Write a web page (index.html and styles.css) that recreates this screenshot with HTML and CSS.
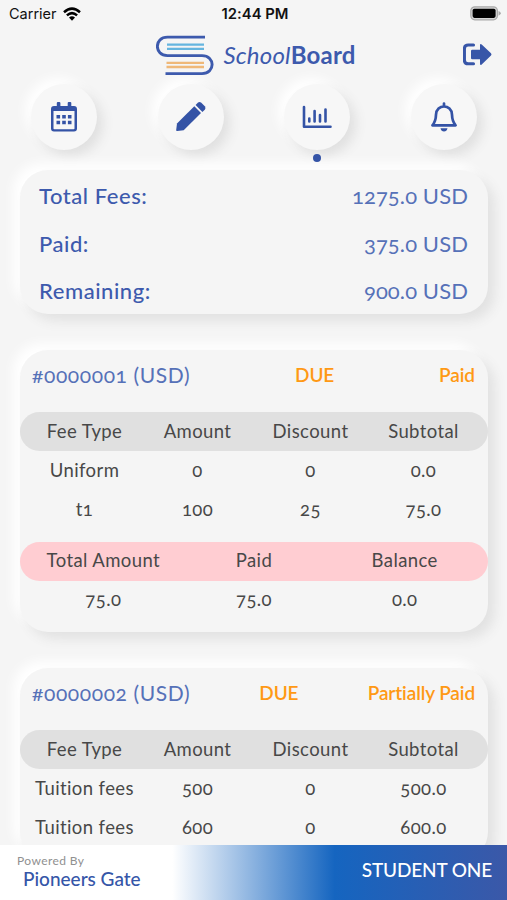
FILE: index.html
```html
<!DOCTYPE html>
<html lang="en">
<head>
<meta charset="utf-8">
<title>SchoolBoard</title>
<link rel="stylesheet" href="styles.css">
</head>
<body>
<div class="app">
  <div class="status">
    <div class="carrier">Carrier
      <svg width="18" height="14" viewBox="0 0 18 14"><g fill="none" stroke="#000" stroke-width="2.5"><path d="M1 5.2Q9-2 17 5.2"/><path d="M3.900 8.400Q9 3.800 14.100 8.400"/></g><path d="M6 10.600Q9 8 12 10.600L9 13.800z"/></svg>
    </div>
    <div class="clock">12:44 PM</div>
    <svg class="battery" width="31" height="15" viewBox="0 0 31 15"><rect x=".8" y=".8" width="26.600" height="13" rx="4" fill="#d6d6d6" stroke="#a9a9a9" stroke-width="1.200"/><rect x="2.600" y="2.700" width="23" height="9.200" rx="1.800"/><path d="M28.500 5Q30.800 6 30.800 7.300T28.500 9.800z" fill="#a9a9a9"/></svg>
  </div>

  <header class="header">
    <div class="brand">
      <svg width="58" height="41" viewBox="0 0 58 41" fill="none">
        <path d="M49 2.100H11.500C-2 2.100-2 20.600 11.500 20.600H46C59.500 20.600 59.500 38.600 46 38.600H9.500" stroke="#3d5aad" stroke-width="2.900"/>
        <path d="M11 9.700h37M11 13.800h37" stroke="#65b5df" stroke-width="2.300"/>
        <path d="M10.500 27.800h37.500M10.500 32h37.500" stroke="#efb878" stroke-width="2.300"/>
      </svg>
      <div class="wordmark"><i>School</i><b>Board</b></div>
    </div>
    <svg class="logout" width="29" height="23" viewBox="0 0 29 23" fill="#3856a8"><path d="M10.500 2H5.200Q1.400 2 1.400 5.800V17Q1.400 20.800 5.200 20.800H10.500" fill="none" stroke="#3856a8" stroke-width="3.100" stroke-linecap="round"/><path d="M9.200 6.700H17V2.200Q17 .1 18.700 1.400L28 10.300Q29 11.500 28 12.600L18.700 21.400Q17 22.800 17 20.600V16.300H9.200Q8 16.300 8 15.100V7.900Q8 6.700 9.200 6.700z"/></svg>
  </header>

  <nav class="tabs">
    <div class="tab"><div class="disc">
      <svg width="28" height="32" viewBox="0 0 28 32" fill="#3453a6"><path d="M4 5H24Q27 5 27 8V27.500Q27 30.500 24 30.500H4Q1 30.500 1 27.500V8Q1 5 4 5zM3.500 10V27.400Q3.500 28.200 4.300 28.200H23.700Q24.500 28.200 24.500 27.400V10z" fill-rule="evenodd"/><rect x="6.800" y="1" width="3.600" height="6" rx="1"/><rect x="17.700" y="1" width="3.600" height="6" rx="1"/><path d="M6.500 14h3.600v3.500H6.500zM12.200 14h3.600v3.500h-3.600zM17.900 14h3.600v3.500h-3.600zM6.500 19.800h3.600v3.500H6.500zM12.200 19.800h3.600v3.500h-3.600zM17.900 19.800h3.600v3.500h-3.600z"/></svg>
    </div></div>
    <div class="tab"><div class="disc">
      <svg width="32" height="32" viewBox="0 0 32 32" fill="#3453a6"><path d="M1.200 29.300L2 22.600 19.300 5.300 26 12 8.700 29.300 2.200 30.100Q1.100 30.200 1.200 29.300z"/><path d="M20.600 4L22.800 1.800Q24.500.400 26.300 1.800L29.800 5.200Q31.200 7 29.800 8.700L27.400 10.900z"/></svg>
    </div></div>
    <div class="tab active"><div class="disc">
      <svg width="30" height="24" viewBox="0 0 30 24" fill="none" stroke="#3453a6" stroke-width="2.600" stroke-linecap="round" stroke-linejoin="round"><path d="M2 2V21.800H28.500M7.300 13.500V16.500M12.600 6V16.500M18 10V16.500M23.500 4.500V16.500"/></svg>
    </div></div>
    <div class="tab"><div class="disc">
      <svg width="28" height="32" viewBox="0 0 28 32" fill="none" stroke="#3453a6" stroke-width="2.700" stroke-linecap="round" stroke-linejoin="round"><path d="M2.400 24.300Q5.800 20.500 6 13.800C6.200 2.700 21.800 2.700 22 13.800Q22.200 20.500 25.600 24.300zM14 2.600V4.500"/><path d="M10.500 27.200H17.500Q16.700 30.500 14 30.500T10.500 27.200z" fill="#3453a6" stroke="none"/></svg>
    </div></div>
  </nav>

  <section class="card summary">
    <div class="line"><span class="label">Total Fees:</span><span class="value">1275.0 USD</span></div>
    <div class="line"><span class="label">Paid:</span><span class="value">375.0 USD</span></div>
    <div class="line"><span class="label">Remaining:</span><span class="value">900.0 USD</span></div>
  </section>

  <section class="card invoice">
    <div class="title"><span class="number">#0000001 (USD)</span><span class="state">DUE</span><span class="state">Paid</span></div>
    <div class="row four head"><span>Fee Type</span><span>Amount</span><span>Discount</span><span>Subtotal</span></div>
    <div class="row four"><span>Uniform</span><span>0</span><span>0</span><span>0.0</span></div>
    <div class="row four"><span>t1</span><span>100</span><span>25</span><span>75.0</span></div>
    <div class="row three total"><span>Total Amount</span><span>Paid</span><span>Balance</span></div>
    <div class="row three"><span>75.0</span><span>75.0</span><span>0.0</span></div>
  </section>

  <section class="card invoice">
    <div class="title"><span class="number">#0000002 (USD)</span><span class="state">DUE</span><span class="state">Partially Paid</span></div>
    <div class="row four head"><span>Fee Type</span><span>Amount</span><span>Discount</span><span>Subtotal</span></div>
    <div class="row four"><span>Tuition fees</span><span>500</span><span>0</span><span>500.0</span></div>
    <div class="row four"><span>Tuition fees</span><span>600</span><span>0</span><span>600.0</span></div>
  </section>

  <footer class="footer">
    <div class="credit"><div class="powered">Powered By</div><div class="company">Pioneers Gate</div></div>
    <div class="student">STUDENT ONE</div>
  </footer>
</div>
</body>
</html>
```
FILE: styles.css
```css
* { box-sizing: border-box; }
body { margin: 0; background: #f5f5f5; font-family: Lato, "Open Sans", sans-serif; font-variant-numeric: oldstyle-nums; font-variant-ligatures: none; color: #484848; }
svg { display: block; flex: none; }
.app { height: 900px; overflow: hidden; display: flex; flex-direction: column; white-space: nowrap; }

.status { height: 27px; flex: none; display: grid; grid-template-columns: 1fr auto 1fr; align-items: center; padding: 0 6px 0 9px; font-family: Inter, sans-serif; font-variant-numeric: normal; font-size: 14.500px; color: #111; }
.carrier { display: flex; align-items: center; gap: 6px; }
.clock { font-weight: 600; font-size: 14.800px; }
.battery { justify-self: end; }

.header { height: 56px; flex: none; display: flex; align-items: center; justify-content: center; position: relative; padding-top: 1px; }
.brand { display: flex; align-items: center; gap: 9px; margin-left: 5px; }
.wordmark { font-size: 24px; letter-spacing: .2px; color: #3d5aad; line-height: 30px; margin-bottom: 2px; }
.logout { position: absolute; right: 15px; top: 16px; }

.tabs { height: 87px; flex: none; display: grid; grid-template-columns: repeat(4, 1fr); padding-left: 1px; }
.tab { display: flex; flex-direction: column; align-items: center; gap: 4px; }
.disc { width: 66px; height: 66px; margin-top: 1px; border-radius: 50%; background: #f7f7f7; display: grid; place-items: center; box-shadow: 6px 6px 12px #e0e0e0, -6px -6px 12px #fff; }
.active::after { content: ""; width: 8px; height: 8px; border-radius: 50%; background: #3453a6; position: relative; z-index: 1; }

.card { flex: none; margin: 0 19px 36px 20px; border-radius: 28px; background: #f5f5f5; box-shadow: 7px 7px 12px #e2e2e2, -7px -7px 12px #fff; }
.summary { height: 144px; padding: 2px 20px 0 19px; }
.line { height: 47.500px; display: flex; align-items: center; justify-content: space-between; font-size: 22px; color: #3d5aad; }
.label { font-weight: 500; letter-spacing: .55px; }
.value { color: #5671b8; letter-spacing: .1px; }

.invoice { padding-bottom: 12px; }
.title { height: 62px; padding: 0 13px 13px 12px; display: flex; align-items: center; justify-content: space-between; font-size: 21px; }
.number { color: #5671b8; letter-spacing: .6px; }
.state { color: #ff9914; font-weight: 600; font-size: 19px; letter-spacing: -.1px; }
.row { height: 39.200px; display: grid; align-items: center; text-align: center; padding: 0 8px 2px; font-size: 18.500px; letter-spacing: .4px; border-radius: 20px; }
.four { grid-template-columns: repeat(4, 1fr); }
.three { grid-template-columns: repeat(3, 1fr); }
.head { background: #e0e0e0; }
.total { background: #ffcdd2; margin-top: 12px; }

.footer { position: absolute; left: 0; top: 845px; width: 507px; height: 55px; display: flex; justify-content: space-between; padding: 0 15px 0 17px; background: linear-gradient(90deg, #fff 34%, #1565c0 66%, #3b58a8 100%); }
.powered { font-size: 12px; letter-spacing: .4px; color: #909090; line-height: 14px; margin-top: 9px; }
.company { font-size: 19px; font-weight: 500; color: #3556a8; line-height: 22px; padding-left: 6px; }
.student { color: #fff; font-size: 19px; font-weight: 500; letter-spacing: -.15px; line-height: 49px; }
```
